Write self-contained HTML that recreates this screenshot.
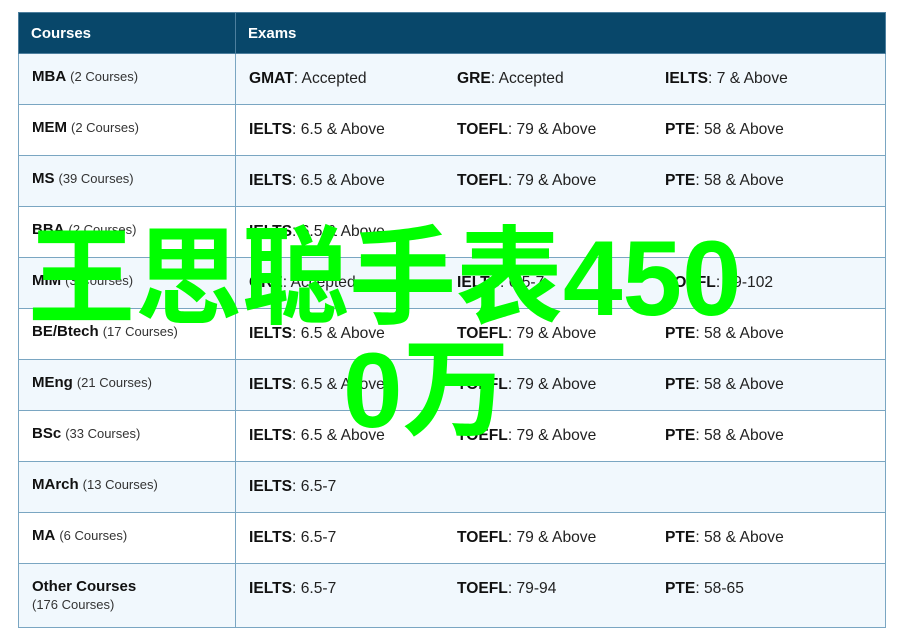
<!DOCTYPE html>
<html><head><meta charset="utf-8"><style>
body{margin:0;background:#fff;width:901px;height:639px;position:relative;overflow:hidden;font-family:"Liberation Sans",Arial,sans-serif;}
table{position:absolute;left:18px;top:12px;width:868px;border-collapse:collapse;}
td,th{border:1px solid #7aa6c2;padding:0;vertical-align:top;text-align:left;}
th{background:#08476a;color:#fff;font-size:15px;height:40px;padding-left:12px;vertical-align:middle;border-color:#4d7f9e;}
tr.r td.c{height:36px;}
tr:nth-child(even) td{background:#f1f8fd;}
tr:nth-child(odd) td{background:#fff;}
td.c{width:203px;padding:14px 0 0 13px;font-size:15px;font-weight:bold;color:#111;}
td.c span{font-weight:normal;font-size:13px;color:#333;margin-left:4px;}
td.e{padding:16px 0 0 13px;font-size:15.6px;color:#222;}
.g{display:flex}.g div{width:208px}
b{color:#111}
.ov{position:absolute;color:#00ff00;font-weight:bold;font-size:107px;line-height:1;font-family:"Liberation Sans","Noto Sans CJK SC",sans-serif;white-space:nowrap;}
</style></head><body>
<table>
<tr><th style="width:203px">Courses</th><th>Exams</th></tr>
<tr class="r"><td class="c">MBA<span>(2 Courses)</span></td><td class="e"><div class="g"><div><b>GMAT</b>: Accepted</div><div><b>GRE</b>: Accepted</div><div><b>IELTS</b>: 7 &amp; Above</div></div></td></tr>
<tr class="r"><td class="c">MEM<span>(2 Courses)</span></td><td class="e"><div class="g"><div><b>IELTS</b>: 6.5 &amp; Above</div><div><b>TOEFL</b>: 79 &amp; Above</div><div><b>PTE</b>: 58 &amp; Above</div></div></td></tr>
<tr class="r"><td class="c">MS<span>(39 Courses)</span></td><td class="e"><div class="g"><div><b>IELTS</b>: 6.5 &amp; Above</div><div><b>TOEFL</b>: 79 &amp; Above</div><div><b>PTE</b>: 58 &amp; Above</div></div></td></tr>
<tr class="r"><td class="c">BBA<span>(2 Courses)</span></td><td class="e"><div class="g"><div><b>IELTS</b>: 6.5 &amp; Above</div></div></td></tr>
<tr class="r"><td class="c">MIM<span>(3 Courses)</span></td><td class="e"><div class="g"><div><b>GRE</b>: Accepted</div><div><b>IELTS</b>: 6.5-7</div><div><b>TOEFL</b>: 79-102</div></div></td></tr>
<tr class="r"><td class="c">BE/Btech<span>(17 Courses)</span></td><td class="e"><div class="g"><div><b>IELTS</b>: 6.5 &amp; Above</div><div><b>TOEFL</b>: 79 &amp; Above</div><div><b>PTE</b>: 58 &amp; Above</div></div></td></tr>
<tr class="r"><td class="c">MEng<span>(21 Courses)</span></td><td class="e"><div class="g"><div><b>IELTS</b>: 6.5 &amp; Above</div><div><b>TOEFL</b>: 79 &amp; Above</div><div><b>PTE</b>: 58 &amp; Above</div></div></td></tr>
<tr class="r"><td class="c">BSc<span>(33 Courses)</span></td><td class="e"><div class="g"><div><b>IELTS</b>: 6.5 &amp; Above</div><div><b>TOEFL</b>: 79 &amp; Above</div><div><b>PTE</b>: 58 &amp; Above</div></div></td></tr>
<tr class="r"><td class="c">MArch<span>(13 Courses)</span></td><td class="e"><div class="g"><div><b>IELTS</b>: 6.5-7</div></div></td></tr>
<tr class="r"><td class="c">MA<span>(6 Courses)</span></td><td class="e"><div class="g"><div><b>IELTS</b>: 6.5-7</div><div><b>TOEFL</b>: 79 &amp; Above</div><div><b>PTE</b>: 58 &amp; Above</div></div></td></tr>
<tr><td class="c" style="height:49px">Other Courses<br><span style="margin:0;line-height:20px">(176 Courses)</span></td><td class="e"><div class="g"><div><b>IELTS</b>: 6.5-7</div><div><b>TOEFL</b>: 79-94</div><div><b>PTE</b>: 58-65</div></div></td></tr>
</table>
<div class="ov" style="left:28px;top:225px">王思聪手表450</div>
<div class="ov" style="left:343px;top:337px">0万</div>
</body></html>
